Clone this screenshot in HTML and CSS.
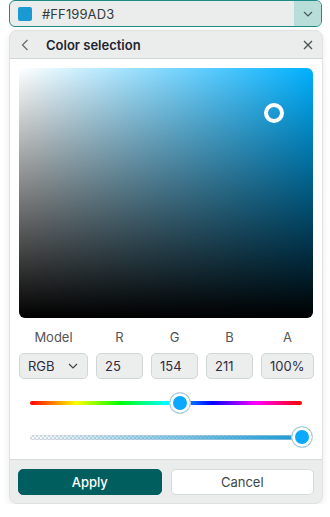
FILE: index.html
```html
<!DOCTYPE html>
<html>
<head>
<meta charset="utf-8">
<link rel="stylesheet" href="styles.css">
</head>
<body>
<div class="field">
  <span class="swatch"></span>
  <span class="value">#FF199AD3</span>
  <span class="toggle">
    <svg width="10" height="6" viewBox="0 0 10 6"><path d="M1 1l4 4 4-4" fill="none" stroke="#4a5a5a" stroke-width="1.2"/></svg>
  </span>
</div>
<div class="panel">
  <div class="header">
    <svg class="back" width="8" height="12" viewBox="0 0 8 12"><path d="M6.5 1L1.5 6l5 5" fill="none" stroke="#6a7070" stroke-width="1.3"/></svg>
    <span class="title">Color selection</span>
    <svg class="close" width="10" height="10" viewBox="0 0 10 10"><path d="M1 1l8 8M9 1l-8 8" fill="none" stroke="#4a5252" stroke-width="1.3"/></svg>
  </div>
  <div class="content">
    <div class="area">
      <span class="picker"></span>
    </div>
    <div class="grid labels">
      <span>Model</span><span>R</span><span>G</span><span>B</span><span>A</span>
    </div>
    <div class="grid inputs">
      <div class="box model">RGB
        <svg width="10" height="6" viewBox="0 0 10 6"><path d="M1 1l4 4 4-4" fill="none" stroke="#444" stroke-width="1.2"/></svg>
      </div>
      <div class="box">25</div>
      <div class="box">154</div>
      <div class="box">211</div>
      <div class="box">100%</div>
    </div>
    <div class="slider">
      <div class="track hue"></div>
      <span class="thumb" style="left:55.3%"></span>
    </div>
    <div class="slider">
      <div class="track alpha"></div>
      <span class="thumb" style="left:100%"></span>
    </div>
  </div>
  <div class="footer">
    <button class="btn apply">Apply</button>
    <button class="btn cancel">Cancel</button>
  </div>
</div>
</body>
</html>
```
FILE: styles.css
```css
* { box-sizing: border-box; }
body {
  margin: 0;
  background: #fff;
  font-family: Inter, "Noto Sans", sans-serif;
  font-size: 13px;
  color: #333;
}
.field {
  margin: 0 8px 0 9px;
  height: 27px;
  border: 1px solid #1f8b86;
  border-radius: 6px;
  background: #ebedec;
  display: flex;
  align-items: center;
  overflow: hidden;
}
.swatch {
  width: 14px;
  height: 14px;
  background: #199ad3;
  border-radius: 2px;
  margin-left: 8px;
}
.value {
  margin-left: 10px;
  flex: 1;
  color: #333a3a;
  letter-spacing: 0.1px;
}
.toggle {
  width: 27px;
  align-self: stretch;
  background: #b9ddd9;
  display: flex;
  align-items: center;
  justify-content: center;
}
.panel {
  margin: 3px 7px 0 9px;
  width: 314px;
  border: 1px solid #dfe2e1;
  border-radius: 8px;
  background: #ebedec;
  box-shadow: 0 3px 8px rgba(0,0,0,0.08);
  overflow: hidden;
}
.header {
  height: 28px;
  display: flex;
  align-items: center;
  border-bottom: 1px solid #cfd8d7;
  padding: 0 9px 0 11px;
}
.title {
  margin-left: 17px;
  font-weight: 600;
  font-size: 13px;
  color: #1d2530;
  flex: 1;
}
.content {
  background: #fff;
  padding: 9px 9px 5px 9px;
  border-bottom: 1px solid #d3dad9;
}
.area {
  position: relative;
  height: 250px;
  border-radius: 6px;
  background:
    linear-gradient(to top, #000, rgba(0,0,0,0)),
    linear-gradient(to right, #fff, #00b0ff);
}
.picker {
  position: absolute;
  left: 245px;
  top: 35px;
  width: 20px;
  height: 20px;
  border: 4px solid #fff;
  border-radius: 50%;
}
.grid {
  display: grid;
  grid-template-columns: 69px 47px 47px 47px 53px;
  column-gap: 8px;
}
.labels {
  margin-top: 12px;
  height: 14px;
  line-height: 14px;
  color: #555;
  text-align: center;
}
.inputs { margin-top: 9px; }
.box {
  height: 26px;
  border: 1px solid #cfd6d5;
  border-radius: 5px;
  background: #eceeed;
  display: flex;
  align-items: center;
  padding: 0 8px;
  color: #332c40;
}
.model { justify-content: space-between; padding-right: 9px; }
.slider {
  position: relative;
  margin: 0 11px;
  height: 34px;
  display: flex;
  align-items: center;
}
.inputs + .slider { margin-top: 7px; }
.track {
  width: 100%;
  height: 4px;
  border-radius: 2px;
}
.hue {
  background: linear-gradient(to right, #f00, #ff0 17%, #0f0 33%, #0ff 50%, #00f 67%, #f0f 83%, #f00);
}
.alpha {
  height: 5px;
  border-radius: 3px;
  background:
    linear-gradient(to right, rgba(25,154,211,0), #199ad3),
    repeating-conic-gradient(#d6dcdc 0 25%, #fff 0 50%) 0 0 / 4px 4px;
  box-shadow: inset 0 0 0 0.5px #ccd;
}
.thumb {
  position: absolute;
  top: 50%;
  width: 22px;
  height: 22px;
  margin: -11px 0 0 -11px;
  border-radius: 50%;
  background: #0aa8ff;
  border: 1px solid #c8d0d0;
  box-shadow: inset 0 0 0 3px #fff;
}
.footer {
  display: flex;
  gap: 9px;
  padding: 9px 8px 8px 8px;
}
.btn {
  flex: 1;
  height: 26px;
  border-radius: 5px;
  font-family: Inter, "Noto Sans", sans-serif;
  font-size: 13px;
}
.apply {
  background: #005e5e;
  border: 1px solid #005e5e;
  color: #fff;
  font-weight: 500;
}
.cancel {
  background: #fff;
  border: 1px solid #d4dbda;
  color: #3b4848;
}
```
